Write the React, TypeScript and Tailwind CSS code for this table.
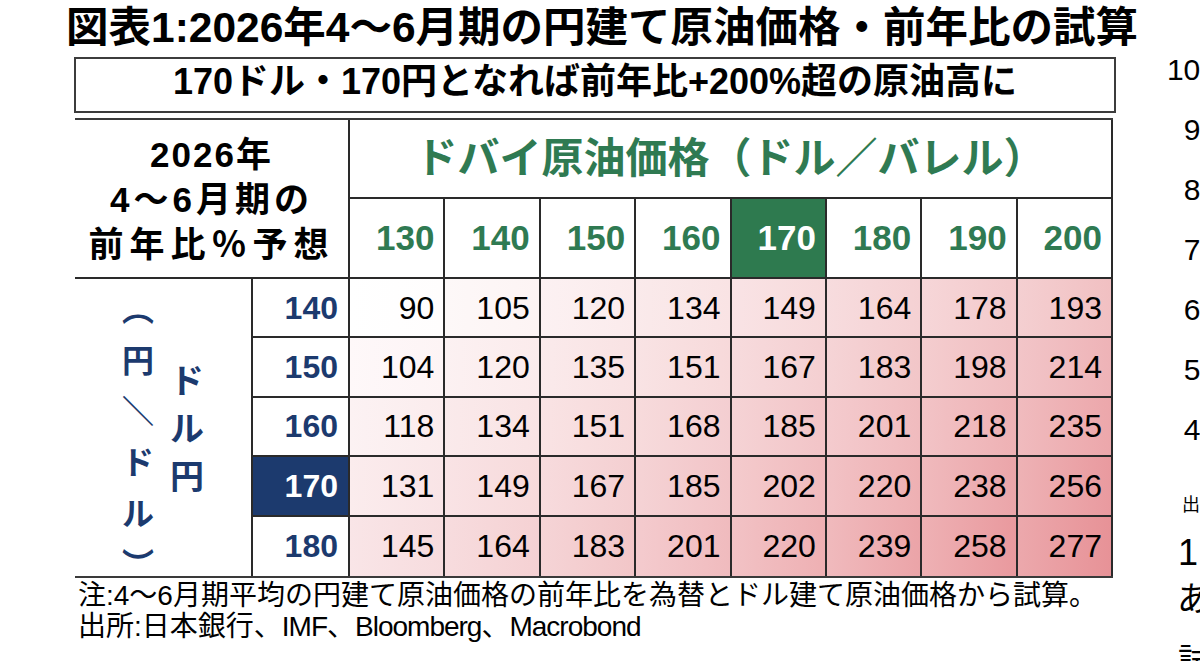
import React from "react";

const cols = [130, 140, 150, 160, 170, 180, 190, 200];
const rows = [
  { y: 140, v: [90, 105, 120, 134, 149, 164, 178, 193] },
  { y: 150, v: [104, 120, 135, 151, 167, 183, 198, 214] },
  { y: 160, v: [118, 134, 151, 168, 185, 201, 218, 235] },
  { y: 170, v: [131, 149, 167, 185, 202, 220, 238, 256] },
  { y: 180, v: [145, 164, 183, 201, 220, 239, 258, 277] },
];

const HI = [231, 146, 151];
function mix(t: number) {
  const c = Math.max(0, Math.min(1, t));
  const r = Math.round(255 + (HI[0] - 255) * c);
  const g = Math.round(255 + (HI[1] - 255) * c);
  const b = Math.round(255 + (HI[2] - 255) * c);
  return `rgb(${r},${g},${b})`;
}
function cellBg(v: number) {
  const t = (v - 90) / (277 - 90);
  return `linear-gradient(to right, ${mix(t * 0.8)}, ${mix(t * 1.02 + 0.02)})`;
}

const FONT = "font-['Liberation_Sans','Noto_Sans_CJK_JP',sans-serif]";

export default function App() {
  return (
    <div className={`w-[1200px] h-[661px] bg-white overflow-hidden flex text-black ${FONT}`}>
      <div className="w-[1150px] shrink-0 flex flex-col">
        {/* Title */}
        <div className="h-[57px] pl-[66px] text-[42.5px] leading-[56px] font-bold whitespace-nowrap">
          図表1:2026年4〜6月期の円建て原油価格・前年比の試算
        </div>
        {/* Subtitle box */}
        <div className="ml-[74px] w-[1042px] h-[56px] border-2 border-[#3c3c3c] flex items-center justify-center pb-[6px]">
          <span className="text-[36px] font-bold whitespace-nowrap leading-none">
            170ドル・170円となれば前年比+200%超の原油高に
          </span>
        </div>
        {/* Table */}
        <div className="mt-[5px] ml-[75px] w-[1038px] border-t-2 border-b-2 border-[#3a3a3a]">
          <div className="grid grid-cols-[178px_97px_repeat(8,95.375px)] grid-rows-[79px_80px_repeat(5,59.4px)]">
            <div className="col-span-2 row-span-2 border-r-2 border-b-2 border-[#2a2a2a] flex flex-col items-center justify-center pt-[2px]">
              <div className="text-[35px] font-bold leading-[45px] tracking-[2px] whitespace-nowrap">2026年</div>
              <div className="text-[35px] font-bold leading-[45px] tracking-[4px] whitespace-nowrap">4〜6月期の</div>
              <div className="text-[35px] font-bold leading-[45px] tracking-[6px] whitespace-nowrap">前年比％予想</div>
            </div>
            <div className="col-span-8 border-r-2 border-b-2 border-[#2a2a2a] flex items-center justify-center">
              <span className="text-[42px] font-bold text-[#2f7a52] whitespace-nowrap">
                ドバイ原油価格（ドル／バレル）
              </span>
            </div>
            {cols.map((c) => (
              <div
                key={c}
                className={`border-r-2 border-b-2 border-[#2a2a2a] flex items-center justify-end pr-[9px] text-[35px] font-bold ${
                  c === 170 ? "bg-[#2e7a4f] text-white" : "text-[#2f7a52]"
                }`}
              >
                {c}
              </div>
            ))}
            <div className="row-span-5 border-r-2 border-[#2a2a2a] flex pl-[43px] gap-[9px] text-[#1c3a6e] font-bold">
              <div className="w-[40px] flex flex-col items-center pt-[6px] text-[32px]">
                {["︵", "円", "＼", "ド", "ル", "︶"].map((ch, i) => (
                  <div key={i} className="h-[51px] leading-[51px]">
                    {ch}
                  </div>
                ))}
              </div>
              <div className="w-[40px] flex flex-col items-center pt-[78px] text-[34px]">
                {["ド", "ル", "円"].map((ch, i) => (
                  <div key={i} className="h-[48px] leading-[48px]">
                    {ch}
                  </div>
                ))}
              </div>
            </div>
            {rows.map((r, ri) => (
              <React.Fragment key={r.y}>
                <div
                  className={`border-r-2 border-[#2a2a2a] ${ri < 4 ? "border-b-2" : ""} flex items-center justify-end pr-[10px] text-[32px] font-bold ${
                    r.y === 170 ? "bg-[#1c3a6e] text-white" : "text-[#1c3a6e]"
                  }`}
                >
                  {r.y}
                </div>
                {r.v.map((v, ci) => (
                  <div
                    key={ci}
                    className={`border-r-2 border-[#2a2a2a] ${ri < 4 ? "border-b-2" : ""} flex items-center justify-end pr-[9px] text-[32px]`}
                    style={{ background: cellBg(v) }}
                  >
                    {v}
                  </div>
                ))}
              </React.Fragment>
            ))}
          </div>
        </div>
        {/* Footer */}
        <div className="pl-[78px] pt-[2px] text-[28px] leading-[31px] whitespace-nowrap">
          <div>注:4〜6月期平均の円建て原油価格の前年比を為替とドル建て原油価格から試算。</div>
          <div>
            出所:日本銀行、<span className="tracking-[-1px]">IMF</span>、
            <span className="tracking-[-1px]">Bloomberg</span>、
            <span className="tracking-[-1px]">Macrobond</span>
          </div>
        </div>
      </div>
      {/* Neighbouring chart, clipped at the page edge */}
      <div className="w-[100px] shrink-0 flex flex-col whitespace-nowrap">
        <div className="mt-[2px] ml-[15px] h-[2px] bg-[#222]" />
        <div className="mt-[38px] w-[67px] flex flex-col items-end text-[30px]">
          {["100", "90", "80", "70", "60", "50", "40"].map((l) => (
            <div key={l} className="h-[60px] leading-[60px]">
              {l}
            </div>
          ))}
        </div>
        <div className="mt-[33px] ml-[32px] text-[18px] leading-[24px]">出所</div>
        <div className="mt-[14px] ml-[28px] text-[36px] leading-[44px]">1</div>
        <div className="mt-[2px] ml-[27px] text-[34px] leading-[44px]">あいう</div>
        <div className="mt-[18px] ml-[28px] text-[34px] leading-[44px]">試算</div>
      </div>
    </div>
  );
}
